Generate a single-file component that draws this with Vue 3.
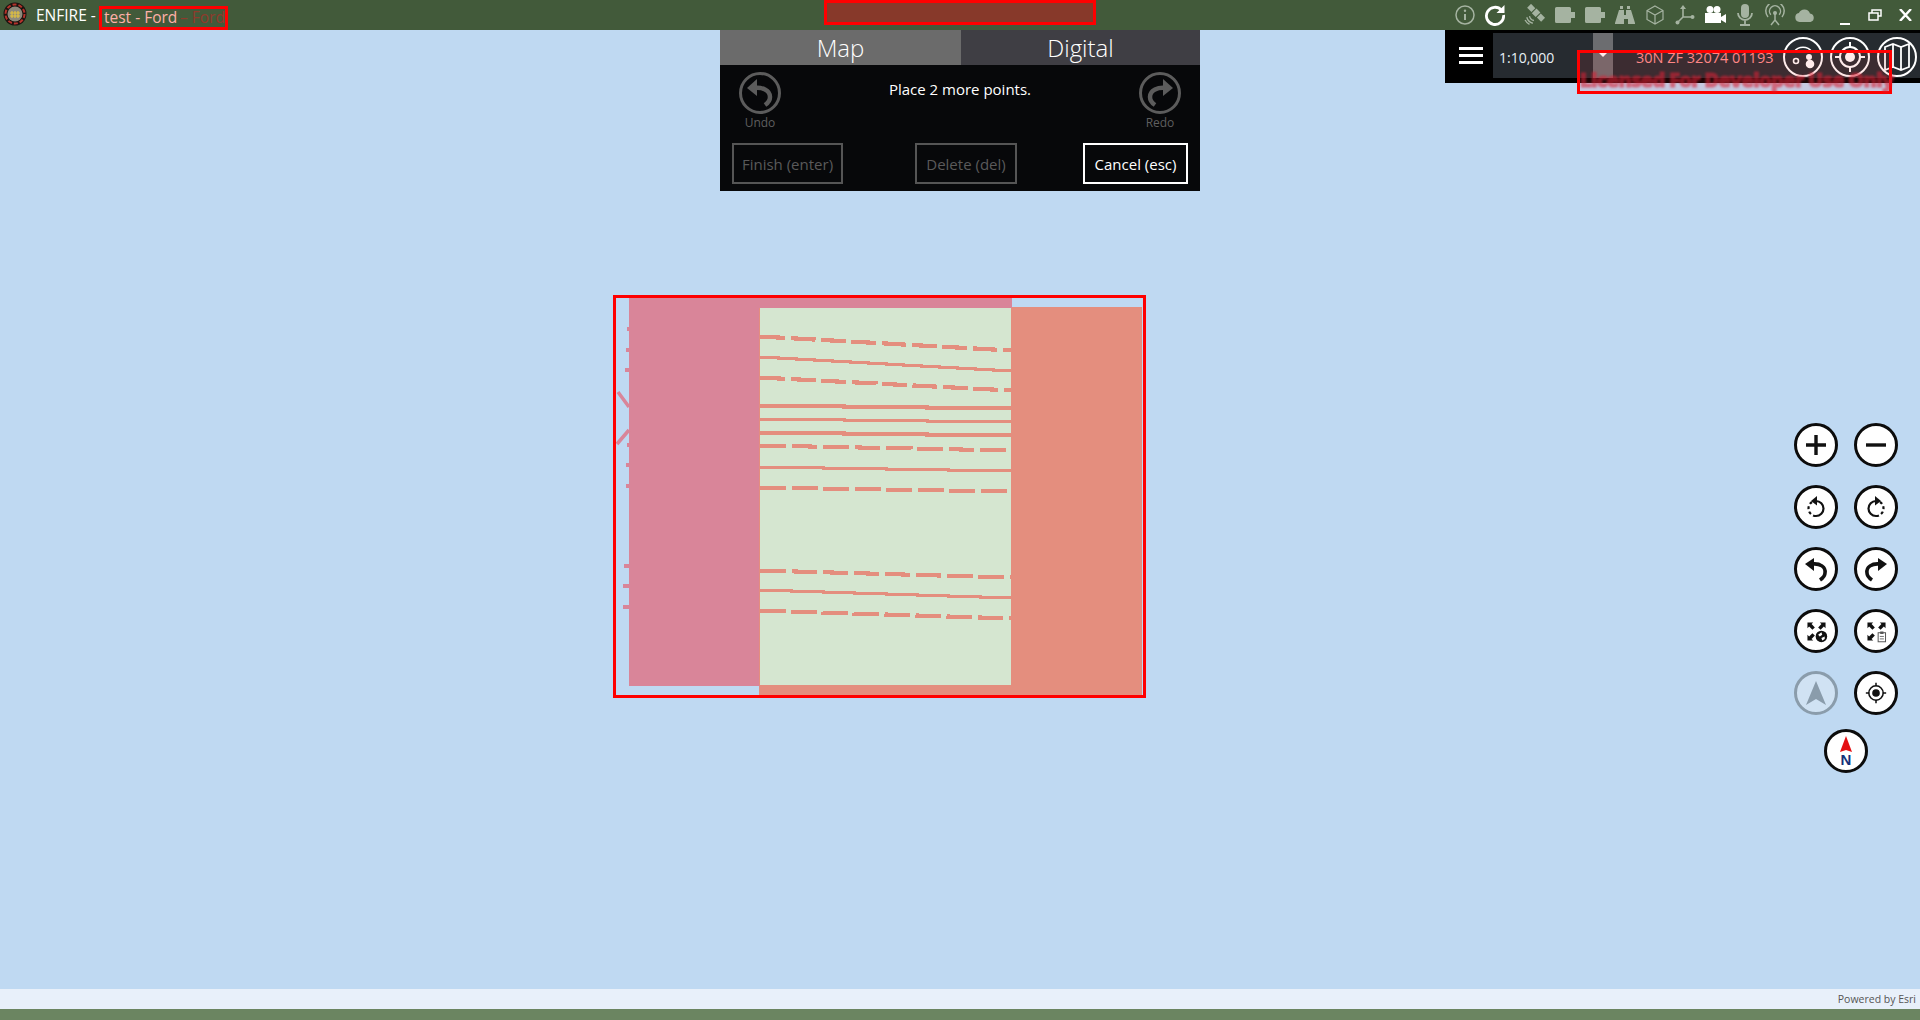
<script setup>
// map feature lines: [x1, y1, x2, y2, stroke width, dashed]
const lines = [
  [760, 337, 1011, 351, 4, true],
  [760, 357, 1011, 371, 3, false],
  [760, 378, 1011, 391, 4, true],
  [760, 406, 1011, 409, 4, false],
  [760, 419, 1011, 422, 3, false],
  [760, 433, 1011, 436, 4, false],
  [760, 446, 1011, 451, 4, true],
  [760, 467, 1011, 471, 3, false],
  [760, 488, 1011, 492, 4, true],
  [760, 571, 1011, 578, 4, true],
  [760, 590, 1011, 598, 3, false],
  [760, 611, 1011, 619, 4, true],
];

const ticks = [
  [627, 329], [626, 350], [625, 370], [627, 445], [626, 465], [626, 486],
  [624, 566], [623, 586], [623, 607],
];

// the map draws slanted lines as whole-pixel steps
function stairs(l) {
  const steps = l[3] - l[1];
  const run = (l[2] - l[0]) / steps;
  let d = `M${l[0]} ${l[1]}`;
  for (let i = 1; i <= steps; i++) {
    d += `H${Math.round(l[0] + run * i)}`;
    if (i < steps) d += `V${l[1] + i}`;
  }
  return d;
}
</script>

<template>
  <div class="page">
    <header class="titlebar">
      <svg class="logo" width="24" height="24" viewBox="0 0 24 24">
        <circle cx="12" cy="12" r="11.5" fill="#1c1410" />
        <circle cx="12" cy="12" r="9.5" fill="none" stroke="#b5332b" stroke-width="2" stroke-dasharray="4 2" />
        <circle cx="12" cy="12" r="7.5" fill="#8d8a7c" />
        <path d="M7 11h10M7 14h10M9 9v7M12 9v7M15 9v7" stroke="#e3c23c" stroke-width="1.2" fill="none" />
      </svg>
      <span class="app-name">ENFIRE -</span>
      <span class="title-redact">
        <span class="title-text">test - Ford</span>
        <span class="ghost">– Ford</span>
      </span>
      <div class="top-redact"></div>
      <div class="tray">
        <span class="cell gap-s">
          <svg width="20" height="20" viewBox="0 0 20 20" fill="none" stroke="#a5b3a1" stroke-width="1.5">
            <circle cx="10" cy="10" r="9" />
            <path d="M10 9v6" stroke-width="2" />
            <circle cx="10" cy="5.8" r="1.2" fill="#a5b3a1" stroke="none" />
          </svg>
        </span>
        <span class="cell gap-m">
          <svg width="22" height="22" viewBox="0 0 22 22" fill="none">
            <path d="M17.5 6.2A8.6 8.6 0 1 0 19.6 11" stroke="#fff" stroke-width="2.8" />
            <path d="M20.5 1v8h-8z" fill="#fff" />
          </svg>
        </span>
        <span class="cell">
          <svg width="22" height="22" viewBox="0 0 20 20" fill="none" stroke="#a5b3a1" stroke-width="1.200">
            <g fill="#a5b3a1" stroke="none" transform="rotate(45 11 8)">
              <rect x="8.500" y="5" width="5" height="6" />
              <rect x="2" y="5.500" width="5.500" height="5" />
              <rect x="14.500" y="5.500" width="5.500" height="5" />
            </g>
            <path d="M5 11a5 5 0 0 0 4 4M2.500 12a8 8 0 0 0 5.500 5.500M1 14.500a9 9 0 0 0 4 4" />
          </svg>
        </span>
        <span class="cell">
          <svg width="20" height="16" viewBox="0 0 20 16">
            <path d="M1.500 0h13a1.500 1.500 0 0 1 1.500 1.500V5h4v6h-4v3.500a1.500 1.500 0 0 1-1.500 1.500h-13A1.500 1.500 0 0 1 0 14.500v-13A1.500 1.500 0 0 1 1.500 0z" fill="#a5b3a1" />
          </svg>
        </span>
        <span class="cell">
          <svg width="20" height="16" viewBox="0 0 20 16">
            <path d="M1.500 0h13a1.500 1.500 0 0 1 1.500 1.500V5h4v6h-4v3.500a1.500 1.500 0 0 1-1.500 1.500h-13A1.500 1.500 0 0 1 0 14.500v-13A1.500 1.500 0 0 1 1.500 0z" fill="#a5b3a1" />
          </svg>
        </span>
        <span class="cell">
          <svg width="20" height="20" viewBox="0 0 20 20" fill="#a5b3a1">
            <path d="M5 1h3v3H5zM12 1h3v3h-3zM4 5h5v5h2V5h5l4 13v1h-7v-5H9v5H0v-1z" />
          </svg>
        </span>
        <span class="cell">
          <svg width="20" height="20" viewBox="0 0 20 20" fill="none" stroke="#a5b3a1" stroke-width="1.200">
            <path d="M10 1l8 4.500v9L10 19l-8-4.500v-9zM2 5.500l8 4.500 8-4.500M10 10v9" />
          </svg>
        </span>
        <span class="cell">
          <svg width="20" height="20" viewBox="0 0 20 20" fill="none" stroke="#a5b3a1" stroke-width="1.600">
            <path d="M8 3v9l-5 5M8 12h9" />
            <path d="M8 0l3 4H5z" fill="#a5b3a1" stroke="none" />
            <circle cx="17.500" cy="12" r="2" fill="#a5b3a1" stroke="none" />
            <circle cx="2.500" cy="17.500" r="2" fill="#a5b3a1" stroke="none" />
          </svg>
        </span>
        <span class="cell">
          <svg width="21" height="18" viewBox="0 0 21 18" fill="#fff">
            <circle cx="5" cy="3.500" r="3.500" />
            <circle cx="12" cy="3.500" r="3.500" />
            <rect x="0" y="7" width="16" height="10" />
            <path d="M16 11l5-3v9l-5-3z" />
          </svg>
        </span>
        <span class="cell">
          <svg width="16" height="22" viewBox="0 0 16 22" fill="none" stroke="#a5b3a1" stroke-width="1.800">
            <rect x="4" y="0" width="8" height="14" rx="4" fill="#a5b3a1" stroke="none" />
            <path d="M1 9a7 7 0 0 0 14 0M8 16v4M3 21h10" />
          </svg>
        </span>
        <span class="cell">
          <svg width="20" height="22" viewBox="0 0 20 22" fill="none" stroke="#a5b3a1" stroke-width="1.500">
            <path d="M3 13a9.200 9.200 0 1 1 14 0M5.800 10.800a5.500 5.500 0 1 1 8.400 0" />
            <circle cx="10" cy="9" r="2" fill="#a5b3a1" stroke="none" />
            <path d="M10 10v6l-4 5M10 16l4 5" />
          </svg>
        </span>
        <span class="cell gap-l">
          <svg width="20" height="13" viewBox="0 0 20 13">
            <path d="M4.500 13a4.500 4.500 0 0 1-.6-8.900A6 6 0 0 1 15 4.400 4.400 4.400 0 0 1 15.500 13z" fill="#a5b3a1" />
          </svg>
        </span>
        <span class="cell">
          <svg width="10" height="20" viewBox="0 0 10 20"><rect x="0" y="18" width="10" height="2" fill="#fff" /></svg>
        </span>
        <span class="cell">
          <svg width="14" height="12" viewBox="0 0 14 12" fill="none" stroke="#fff" stroke-width="1.500">
            <rect x="1" y="4" width="9" height="7" />
            <path d="M4 4V1h9v6h-3" />
          </svg>
        </span>
        <span class="cell">
          <svg width="13" height="12" viewBox="0 0 13 12" stroke="#fff" stroke-width="2.400"><path d="M1 0l11 12M12 0L1 12" /></svg>
        </span>
      </div>
    </header>

    <main class="map">
      <svg class="features" width="560" height="420" viewBox="600 290 560 420">
        <g shape-rendering="crispEdges">
          <rect x="1011" y="307" width="131" height="388" fill="#e48e7e" />
          <rect x="759" y="685" width="252" height="10" fill="#e48e7e" />
          <path d="M629 298H1012V308H760V686H629z" fill="#d98599" />
          <rect x="760" y="308" width="251" height="377" fill="#d5e6d0" />
          <rect x="759" y="308" width="1" height="377" fill="#e48e7e" />
          <path
            v-for="(l, i) in lines"
            :key="i"
            :d="stairs(l)"
            :stroke-width="l[4]"
            :stroke-dasharray="l[5] ? '26 6' : null"
            stroke="#e48e7e"
            fill="none"
          />
          <rect v-for="(t, i) in ticks" :key="'t' + i" :x="t[0]" :y="t[1] - 2" :width="629 - t[0]" height="4" fill="#d98599" />
        </g>
        <path d="M618 392l11 15M617 444l12-14" stroke="#d98599" stroke-width="3.500" fill="none" />
        <rect x="614.500" y="296.500" width="530" height="400" fill="none" stroke="#f00" stroke-width="3" />
      </svg>

      <section class="draw-panel">
        <div class="tabs">
          <div class="tab tab-map">Map</div>
          <div class="tab tab-digital">Digital</div>
        </div>
        <div class="prompt-row">
          <div class="history">
            <svg width="42" height="42" viewBox="0 0 42 42" fill="none" stroke="#5c5c5c">
              <circle cx="21" cy="21" r="19.500" stroke-width="3" />
              <path d="M15 16c8-1 16 2 16 9 0 3-2 6-5 8" stroke-width="4.500" />
              <path d="M18 7L8 16l10 8z" fill="#5c5c5c" stroke="none" />
            </svg>
            <span>Undo</span>
          </div>
          <p class="prompt">Place 2 more points.</p>
          <div class="history">
            <svg width="42" height="42" viewBox="0 0 42 42" fill="none" stroke="#5c5c5c">
              <circle cx="21" cy="21" r="19.500" stroke-width="3" />
              <path d="M27 16c-8-1-16 2-16 9 0 3 2 6 5 8" stroke-width="4.500" />
              <path d="M24 7l10 9-10 8z" fill="#5c5c5c" stroke="none" />
            </svg>
            <span>Redo</span>
          </div>
        </div>
        <div class="actions">
          <button class="btn finish" disabled>Finish (enter)</button>
          <button class="btn delete" disabled>Delete (del)</button>
          <button class="btn cancel">Cancel (esc)</button>
        </div>
      </section>

      <section class="coord-panel">
        <div class="menu-btn"><i></i><i></i><i></i></div>
        <div class="scale-box">
          <span class="scale">1:10,000</span>
          <span class="drop"><b></b></span>
          <span class="coords">30N ZF 32074 01193</span>
        </div>
        <div class="round-tools">
          <span class="tool">
            <svg width="34" height="34" viewBox="0 0 34 34" fill="none" stroke="#fff" stroke-width="1.600">
              <path d="M8 12a11 11 0 0 1 18 0" />
              <circle cx="10" cy="21" r="2.500" />
              <circle cx="23" cy="17" r="2.200" fill="#fff" />
              <circle cx="24" cy="24" r="3.500" fill="#fff" />
            </svg>
          </span>
          <span class="tool">
            <svg width="34" height="34" viewBox="0 0 34 34" fill="none" stroke="#fff" stroke-width="2">
              <circle cx="17" cy="17" r="10" />
              <circle cx="17" cy="17" r="5" fill="#fff" stroke="none" />
              <path d="M17 2v5M17 27v5M2 17h5M27 17h5" />
            </svg>
          </span>
          <span class="tool">
            <svg width="34" height="34" viewBox="0 0 34 34" fill="none" stroke="#fff" stroke-width="1.800">
              <path d="M5 7l8-3 8 3 8-3v23l-8 3-8-3-8 3zM13 4v23M21 7v23" />
            </svg>
          </span>
        </div>
      </section>

      <div class="license-redact">
        <span class="license">Licensed For Developer Use Only</span>
      </div>

      <div class="map-tools">
        <button class="map-btn">
          <svg width="26" height="26" viewBox="0 0 26 26" stroke="#111" stroke-width="3.400"><path d="M13 3v20M3 13h20" /></svg>
        </button>
        <button class="map-btn">
          <svg width="26" height="26" viewBox="0 0 26 26" stroke="#111" stroke-width="3.400"><path d="M3 13h20" /></svg>
        </button>
        <button class="map-btn">
          <svg width="28" height="28" viewBox="0 0 28 28" fill="none" stroke="#111" stroke-width="2.200">
            <path d="M14 8a7.500 7.500 0 0 1 7.500 7.500A7.500 7.500 0 0 1 14 23" />
            <path d="M14 23a7.500 7.500 0 0 1-7.500-7.500A7.500 7.500 0 0 1 10 9" stroke-dasharray="3 2.500" />
            <path d="M15 3l-6 5 6 4.500z" fill="#111" stroke="none" />
          </svg>
        </button>
        <button class="map-btn">
          <svg width="28" height="28" viewBox="0 0 28 28" fill="none" stroke="#111" stroke-width="2.200">
            <g transform="matrix(-1 0 0 1 28 0)">
              <path d="M14 8a7.500 7.500 0 0 1 7.500 7.500A7.500 7.500 0 0 1 14 23" />
              <path d="M14 23a7.500 7.500 0 0 1-7.500-7.500A7.500 7.500 0 0 1 10 9" stroke-dasharray="3 2.500" />
              <path d="M15 3l-6 5 6 4.500z" fill="#111" stroke="none" />
            </g>
          </svg>
        </button>
        <button class="map-btn">
          <svg width="28" height="28" viewBox="0 0 28 28" fill="none" stroke="#111">
            <path d="M10 9c8-1 14 3 13 9 0 3-2 5-5 7" stroke-width="3.600" />
            <path d="M12 3L3 9l9 7z" fill="#111" stroke="none" />
          </svg>
        </button>
        <button class="map-btn">
          <svg width="28" height="28" viewBox="0 0 28 28" fill="none" stroke="#111">
            <path d="M18 9c-8-1-14 3-13 9 0 3 2 5 5 7" stroke-width="3.600" />
            <path d="M16 3l9 6-9 7z" fill="#111" stroke="none" />
          </svg>
        </button>
        <button class="map-btn">
          <svg width="23" height="23" viewBox="0 0 28 28" fill="#111">
            <path d="M3 3h7L8 5l4 4-3 3-4-4-2 2zM25 3v7l-2-2-4 4-3-3 4-4-2-2zM3 25v-7l2 2 4-4 3 3-4 4 2 2z" />
            <circle cx="20" cy="20" r="7" />
            <path d="M16 18l4-3 1 3-3 2zM20 22l4-2 0 3-3 2z" fill="#fff" />
          </svg>
        </button>
        <button class="map-btn">
          <svg width="23" height="23" viewBox="0 0 28 28" fill="#111">
            <path d="M3 3h7L8 5l4 4-3 3-4-4-2 2zM25 3v7l-2-2-4 4-3-3 4-4-2-2zM3 25v-7l2 2 4-4 3 3-4 4 2 2z" />
            <rect x="16" y="15.500" width="9" height="11" fill="#fff" stroke="#555" stroke-width="1.200" />
            <rect x="18.500" y="14" width="4" height="3" fill="#555" />
            <path d="M18 20h5M18 23h5" stroke="#555" />
          </svg>
        </button>
        <button class="map-btn off">
          <svg width="24" height="28" viewBox="0 0 24 28"><path d="M12 2l10 24-10-6-10 6z" fill="#8a9cab" /></svg>
        </button>
        <button class="map-btn">
          <svg width="22" height="22" viewBox="0 0 26 26" fill="none" stroke="#111" stroke-width="1.800">
            <circle cx="13" cy="13" r="8.500" />
            <circle cx="13" cy="13" r="4.500" fill="#111" stroke="none" />
            <path d="M13 1v4M13 21v4M1 13h4M21 13h4" />
          </svg>
        </button>
        <button class="map-btn north">
          <svg width="20" height="32" viewBox="0 0 20 32">
            <path d="M10 1l6 16-6-2-6 2z" fill="#e40f12" />
            <text x="10" y="30" text-anchor="middle" class="north-n">N</text>
          </svg>
        </button>
      </div>
    </main>

    <div class="attribution">Powered by Esri</div>
    <footer class="statusbar"></footer>
  </div>
</template>

<style scoped>
.page {
  display: flex;
  flex-direction: column;
  width: 1920px;
  height: 1020px;
  overflow: hidden;
  font-family: "Open Sans", "Noto Sans", sans-serif;
}

.titlebar {
  position: relative;
  display: flex;
  align-items: center;
  flex: 0 0 30px;
  background: #425a3a;
  color: #fff;
}

.logo {
  margin: 0 0 2px 3px;
}

.app-name {
  margin-left: 9px;
  font-size: 15.500px;
  line-height: 30px;
}

.title-redact {
  position: absolute;
  left: 99px;
  top: 6px;
  width: 129px;
  height: 24px;
  border: 3px solid #f00;
  box-sizing: border-box;
  font-size: 15.500px;
  line-height: 17px;
  white-space: nowrap;
}

.title-text {
  position: absolute;
  left: 2px;
  color: #ffb0a8;
}

.ghost {
  position: absolute;
  left: 78px;
  color: #8f3a2c;
}

.top-redact {
  position: absolute;
  left: 824px;
  top: 0;
  width: 272px;
  height: 25px;
  box-sizing: border-box;
  border: 3px solid #f00;
  background: #87392a;
}

.tray {
  display: flex;
  align-items: center;
  margin-left: auto;
}

.cell {
  display: flex;
  align-items: center;
  justify-content: center;
  width: 30px;
  height: 30px;
}

.gap-m {
  margin-right: 10px;
}

.gap-l {
  margin-right: 10px;
}

.map {
  position: relative;
  flex: 1;
  background: #bfd9f2;
}

.features {
  position: absolute;
  left: 600px;
  top: 260px;
}

.draw-panel {
  position: absolute;
  left: 720px;
  top: 0;
  width: 480px;
  height: 161px;
  display: flex;
  flex-direction: column;
  background: #07080a;
  color: #fff;
}

.tabs {
  display: flex;
  flex: 0 0 35px;
}

.tab {
  display: flex;
  align-items: center;
  justify-content: center;
  font-size: 24px;
  font-weight: 300;
  line-height: 35px;
}

.tab-map {
  width: 241px;
  background: #6b6b6b;
}

.tab-digital {
  width: 239px;
  background: #3f3e44;
}

.prompt-row {
  display: flex;
  justify-content: space-between;
  height: 78px;
  padding: 7px 19px 0;
  box-sizing: border-box;
}

.history {
  display: flex;
  flex-direction: column;
  align-items: center;
  width: 42px;
  color: #5f5f5f;
  font-size: 12px;
  line-height: 16px;
}

.history span {
  margin-top: 1px;
}

.prompt {
  margin: 7px 0 0;
  font-size: 15px;
  line-height: 20px;
}

.actions {
  display: flex;
  justify-content: space-between;
  padding: 0 12px;
}

.btn {
  height: 41px;
  padding: 0;
  background: transparent;
  border: 2px solid #555;
  color: #5a5a5a;
  font-family: inherit;
  font-size: 15px;
  font-weight: 400;
}

.finish {
  width: 111px;
}

.delete {
  width: 102px;
  margin-left: 6px;
}

.cancel {
  width: 105px;
  border-color: #fff;
  color: #fff;
}

.coord-panel {
  position: absolute;
  right: 0;
  top: 0;
  display: flex;
  width: 475px;
  height: 53px;
  box-sizing: border-box;
  padding: 3px 0 5px;
  background: #000;
}

.menu-btn {
  display: flex;
  flex-direction: column;
  justify-content: center;
  gap: 4px;
  width: 48px;
  padding-left: 14px;
  box-sizing: border-box;
}

.menu-btn i {
  display: block;
  width: 24px;
  height: 3px;
  background: #fff;
}

.scale-box {
  display: flex;
  align-items: center;
  flex: 1;
  background: #262b30;
  color: #e8f0f5;
  font-size: 14px;
}

.scale {
  width: 94px;
  margin: 3px 0 0 6px;
}

.drop {
  display: flex;
  align-items: center;
  justify-content: center;
  width: 20px;
  height: 100%;
  background: #6c6d70;
}

.drop b {
  width: 0;
  height: 0;
  margin-bottom: 2px;
  border-left: 5px solid transparent;
  border-right: 5px solid transparent;
  border-top: 5px solid #fff;
}

.coords {
  margin: 3px 0 0 23px;
  color: #ff8f8f;
  font-size: 14.500px;
}

.round-tools {
  position: absolute;
  right: 3px;
  top: 7px;
  display: flex;
  gap: 7px;
}

.tool {
  display: flex;
  align-items: center;
  justify-content: center;
  width: 40px;
  height: 40px;
  box-sizing: border-box;
  border: 2.500px solid #fff;
  border-radius: 50%;
}

.license-redact {
  position: absolute;
  left: 1577px;
  top: 20px;
  width: 315px;
  height: 44px;
  box-sizing: border-box;
  border: 3px solid #f00;
  background: rgba(255, 60, 60, 0.1);
}

.license {
  position: absolute;
  left: 0;
  top: 15px;
  color: rgba(215, 35, 55, 0.55);
  font-size: 20px;
  font-weight: 800;
  line-height: 24px;
  letter-spacing: -0.7px;
  white-space: nowrap;
  -webkit-text-stroke: 1px rgba(215, 35, 55, 0.55);
  filter: blur(0.8px);
}

.map-tools {
  position: absolute;
  right: 22px;
  top: 393px;
  display: grid;
  grid-template-columns: 44px 44px;
  gap: 18px 16px;
}

.map-btn {
  display: flex;
  align-items: center;
  justify-content: center;
  width: 44px;
  height: 44px;
  padding: 0;
  box-sizing: border-box;
  background: #fff;
  border: 3px solid #0c0c0c;
  border-radius: 50%;
}

.off {
  background: #d0e2f3;
  border-color: #8a9cab;
}

.north {
  grid-column: 1 / 3;
  justify-self: center;
  margin-top: -4px;
}

.north-n {
  fill: #14307a;
  font-family: "Liberation Sans", sans-serif;
  font-size: 15px;
  font-weight: 700;
}

.attribution {
  flex: 0 0 20px;
  padding-right: 4px;
  background: #e8f0fa;
  color: #555;
  font-size: 10.500px;
  line-height: 20px;
  text-align: right;
}

.statusbar {
  flex: 0 0 11px;
  background: #6b8561;
}
</style>
